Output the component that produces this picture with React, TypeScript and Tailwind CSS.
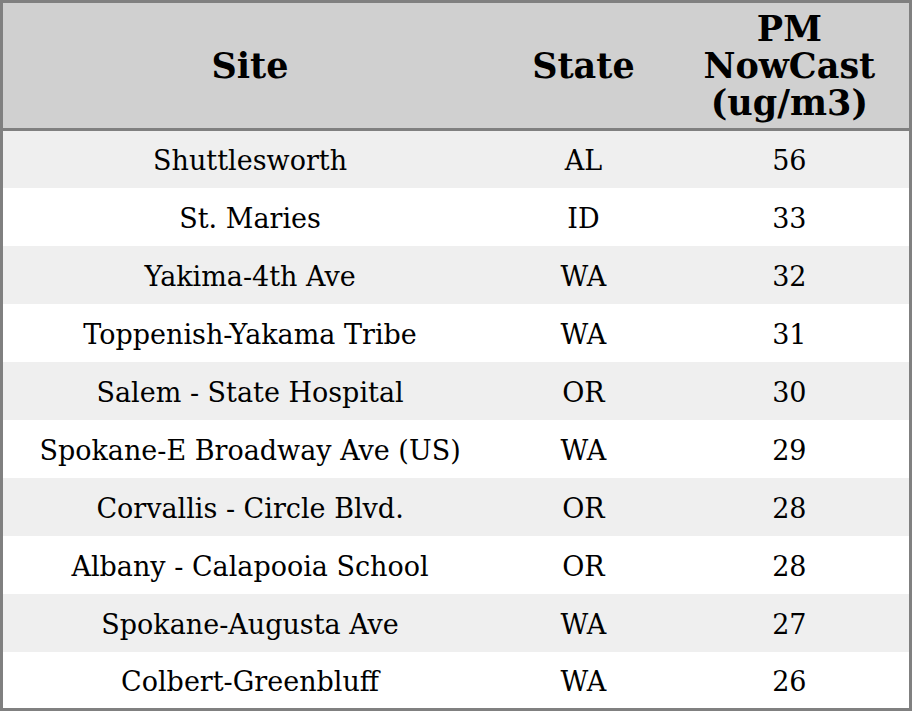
const rows = [
  ["Shuttlesworth", "AL", "56"],
  ["St. Maries", "ID", "33"],
  ["Yakima-4th Ave", "WA", "32"],
  ["Toppenish-Yakama Tribe", "WA", "31"],
  ["Salem - State Hospital", "OR", "30"],
  ["Spokane-E Broadway Ave (US)", "WA", "29"],
  ["Corvallis - Circle Blvd.", "OR", "28"],
  ["Albany - Calapooia School", "OR", "28"],
  ["Spokane-Augusta Ave", "WA", "27"],
  ["Colbert-Greenbluff", "WA", "26"],
]

export default function App() {
  return (
    <div className="w-[912px] h-[711px] bg-white font-['DejaVu_Serif',serif] text-black">
      <table className="w-full border-[3px] border-[#808080] border-collapse table-fixed">
        <colgroup>
          <col className="w-[494px]" />
          <col className="w-[172px]" />
          <col className="w-[240px]" />
        </colgroup>
        <thead>
          <tr className="bg-[#d0d0d0] border-b-[3px] border-[#808080]">
            <th className="text-[35px] leading-[37px] font-bold py-[7px]">Site</th>
            <th className="text-[35px] leading-[37px] font-bold py-[7px]">State</th>
            <th className="text-[35px] leading-[37px] font-bold py-[7px]">
              PM
              <br />
              NowCast
              <br />
              (ug/m3)
            </th>
          </tr>
        </thead>
        <tbody>
          {rows.map((r, i) => (
            <tr key={i} className={i % 2 === 0 ? "bg-[#efefef]" : "bg-white"}>
              <td className="text-center text-[27px] leading-[30px] h-[58px] pt-[4px] pb-0 px-0">{r[0]}</td>
              <td className="text-center text-[27px] leading-[30px] h-[58px] pt-[4px] pb-0 px-0">{r[1]}</td>
              <td className="text-center text-[27px] leading-[30px] h-[58px] pt-[4px] pb-0 px-0">{r[2]}</td>
            </tr>
          ))}
        </tbody>
      </table>
    </div>
  )
}
